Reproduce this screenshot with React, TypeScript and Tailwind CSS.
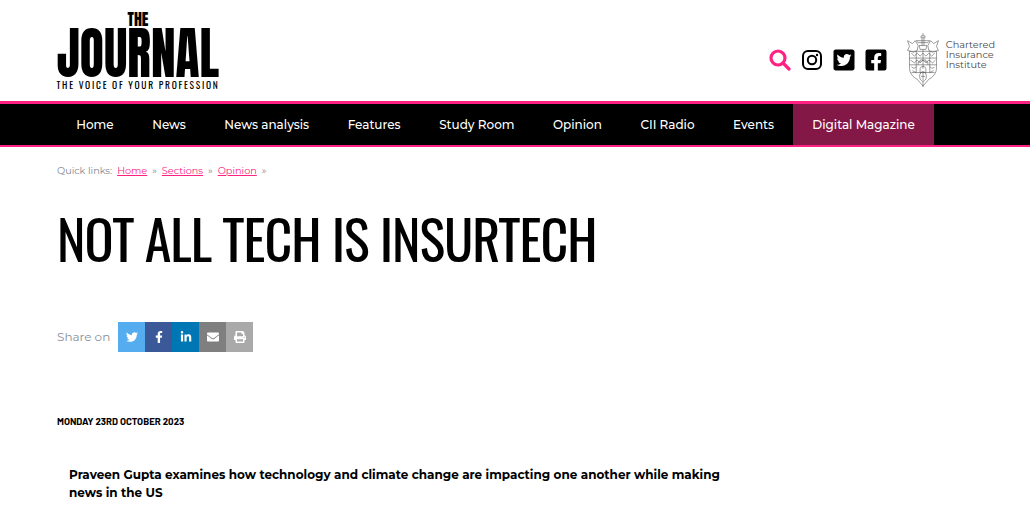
import { FaEnvelope, FaFacebookF, FaFacebookSquare, FaLinkedinIn, FaPrint, FaTwitter, FaTwitterSquare } from "react-icons/fa";

const navItems = ["Home", "News", "News analysis", "Features", "Study Room", "Opinion", "CII Radio", "Events"];

const sans = "font-['Montserrat','Inter','Noto_Sans',sans-serif]";

function Logo() {
  return (
    <div className="flex w-[162px] flex-col items-center text-black">
      <div className="h-[15px] font-['Anton','Oswald',sans-serif] text-[16px] leading-[15px]">THE</div>
      <div className="mt-[2px] h-[49px] whitespace-nowrap font-['Anton','Oswald',sans-serif] text-[49.5px] leading-[49px] [transform:scaleY(1.14)]">
        JOURNAL
      </div>
      <div className="mt-[2px] whitespace-nowrap font-['Oswald',sans-serif] text-[9.5px] leading-[10px] tracking-[1.72px]">
        THE VOICE OF YOUR PROFESSION
      </div>
    </div>
  );
}

function Crest() {
  return (
    <svg width="34" height="56" viewBox="0 0 34 58" fill="none" stroke="#555" strokeWidth="0.6">
      <path d="M17 1v3M15 4h4v2h-4zM16 6v8M18 6v8M10 9h14l-2 2H12zM13 14h8l-1 4h-6z" />
      <path d="M1 9l5 3 3-3 3 5-1 5-4 2-6-2 2-4zM33 9l-5 3-3-3-3 5 1 5 4 2 6-2-2-4z" />
      <path d="M3 20h28v17c0 6-4 10-8 12l-6 7-6-7c-4-2-8-6-8-12z" />
      <path d="M3 27h28M3 34h28M5 42h24M10 20v22M17 18v20M24 20v22" />
      <path d="M5 22l3 3 3-3 3 3 3-3 3 3 3-3 3 3 3-3M4 29l4 3 3-3 3 3 3-3 3 3 3-3 4 3 3-3" />
      <path d="M12 34v-3h2v-2h6v2h2v3M14 38c0-3 6-3 6 0v4h-6z" />
      <path d="M5 36c2 2 4 2 5 0M24 36c2 2 4 2 5 0M6 40l4 2M28 40l-4 2" />
      <ellipse cx="17" cy="46" rx="3.5" ry="5" />
      <path d="M15 46h4M17 42v8M17 51v6" />
    </svg>
  );
}

export default function App() {
  return (
    <div className={`h-[522px] w-[1030px] overflow-hidden bg-white ${sans}`}>
      <header className="flex h-[101px] items-center justify-between pl-[57px] pr-[35px]">
        <div className="pt-[1px]">
          <Logo />
        </div>
        <div className="flex items-center pt-[19px]">
          <svg width="22" height="22" viewBox="0 0 22 22" fill="none" stroke="#ff2283" strokeWidth="3.2" strokeLinecap="round" className="mr-[11px]">
            <circle cx="9" cy="9" r="7" />
            <path d="M14 14l6 6" />
          </svg>
          <svg width="20" height="20" viewBox="0 0 20 20" fill="none" stroke="#000" className="mr-[10px]">
            <rect x="1" y="1" width="18" height="18" rx="5" strokeWidth="2" />
            <circle cx="10" cy="10" r="4.2" strokeWidth="2" />
            <circle cx="15" cy="5" r="1.2" fill="#000" stroke="none" />
          </svg>
          <FaTwitterSquare className="mr-[8px] text-[24px] text-black" />
          <FaFacebookSquare className="mr-[18px] text-[24px] text-black" />
          <Crest />
          <div className="mb-[11px] ml-[6px] text-[9.75px] leading-[10px] text-[#4a4a4a]">
            <div>Chartered</div>
            <div>Insurance</div>
            <div>Institute</div>
          </div>
        </div>
      </header>

      <nav className="flex h-[46px] border-y-[3px] border-b-2 border-[#ff2283] bg-black pl-[57px]">
        {navItems.map((item) => (
          <a key={item} className="flex items-center px-[19.25px] text-[12px] font-medium text-white">
            {item}
          </a>
        ))}
        <a className="flex items-center bg-[#831746] px-[19px] text-[12px] font-medium text-white">Digital Magazine</a>
      </nav>

      <main className="pl-[57px]">
        <div className="mt-[17px] flex items-center gap-[5px] text-[9.7px] leading-[14px] text-[#808590]">
          <span>Quick links:</span>
          <a className="text-[#ff2283] underline">Home</a>
          <span>»</span>
          <a className="text-[#ff2283] underline">Sections</a>
          <span>»</span>
          <a className="text-[#ff2283] underline">Opinion</a>
          <span>»</span>
        </div>

        <h1 className="mt-[28px] whitespace-nowrap font-['Oswald',sans-serif] text-[54px] font-normal leading-[64px] tracking-[-1.08px] text-black">
          NOT ALL TECH IS INSURTECH
        </h1>

        <div className="mt-[52px] flex items-center">
          <span className="mr-[8px] text-[12px] text-[#8a8f99]">Share on</span>
          <div className="flex h-[30px] text-[12px] text-white">
            <span className="flex w-[27px] items-center justify-center bg-[#55acee]"><FaTwitter /></span>
            <span className="flex w-[27px] items-center justify-center bg-[#3b5998]"><FaFacebookF /></span>
            <span className="flex w-[27px] items-center justify-center bg-[#0077b5]"><FaLinkedinIn /></span>
            <span className="flex w-[27px] items-center justify-center bg-[#7f7f7f]"><FaEnvelope /></span>
            <span className="flex w-[27px] items-center justify-center bg-[#a9a9a9]"><FaPrint /></span>
          </div>
        </div>

        <div className="mt-[62px] font-['Barlow','Roboto',sans-serif] text-[9.7px] font-bold uppercase leading-[14px] text-black">
          Monday 23rd October 2023
        </div>

        <p className="ml-[12px] mt-[38px] w-[670px] text-[12px] font-bold leading-[18px] text-black">
          Praveen Gupta examines how technology and climate change are impacting one another while making news in the US
        </p>
      </main>
    </div>
  );
}
